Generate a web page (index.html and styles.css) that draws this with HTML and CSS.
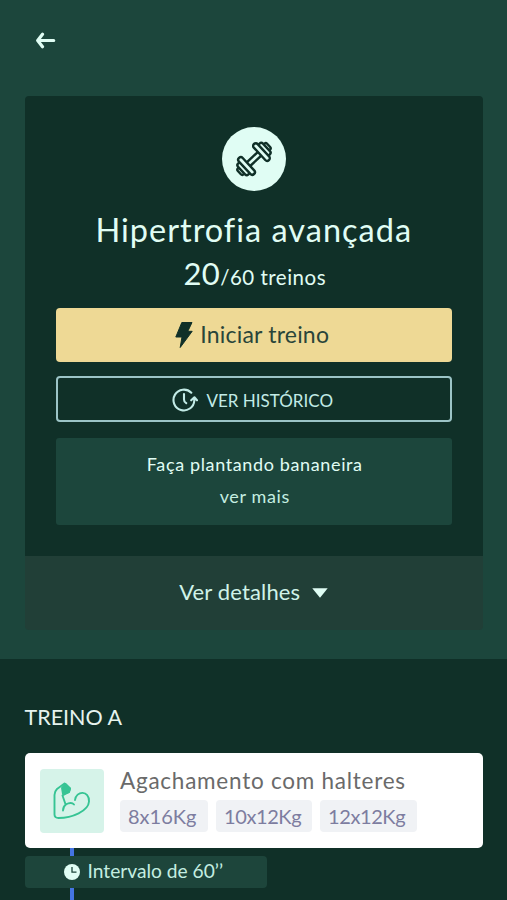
FILE: index.html
```html
<!DOCTYPE html>
<html lang="pt-BR">
<head>
<meta charset="utf-8">
<meta name="viewport" content="width=device-width, initial-scale=1">
<title>Hipertrofia avançada</title>
<link rel="stylesheet" href="styles.css">
</head>
<body>
<main class="screen">
  <section class="hero">
    <header class="topbar">
      <a class="back" aria-label="Voltar">
        <svg width="22" height="18" viewBox="0 0 22 18" fill="none" stroke="currentColor" stroke-width="3.200" stroke-linecap="round" stroke-linejoin="round"><path d="M18.700 8.500H3.500M7.500 2.200L2.700 8.500L7.500 14.800"/></svg>
      </a>
    </header>
    <article class="plan">
      <div class="plan-body">
        <div class="plan-icon">
          <svg width="40" height="40" viewBox="-20 -20 40 40" fill="#e0fdf4" stroke="#103028" stroke-width="2.400" stroke-linejoin="round">
            <g transform="rotate(-43)">
              <rect x="-20" y="-4" width="4" height="8" rx="1.800"/>
              <rect x="16" y="-4" width="4" height="8" rx="1.800"/>
              <rect x="-17" y="-7.500" width="5" height="15" rx="2.400"/>
              <rect x="12" y="-7.500" width="5" height="15" rx="2.400"/>
              <rect x="-8" y="-2.500" width="16" height="5"/>
              <rect x="-12.800" y="-11" width="5.200" height="22" rx="2.600"/>
              <rect x="7.600" y="-11" width="5.200" height="22" rx="2.600"/>
            </g>
          </svg>
        </div>
        <h1 class="plan-title">Hipertrofia avançada</h1>
        <p class="progress"><span class="done">20</span><span class="total">/60 treinos</span></p>
        <button class="btn start">
          <svg width="18" height="26" viewBox="0 0 18 26"><path d="M6.800 0.500H17L12.800 9.300H17.200L5.200 25.500L7 15H0.800Z" fill="#103028" stroke="#103028" stroke-linejoin="round"/></svg>
          <span>Iniciar treino</span>
        </button>
        <button class="btn history">
          <svg width="26" height="24" viewBox="0 0 26 24" fill="none" stroke="currentColor" stroke-width="2.100" stroke-linecap="round" stroke-linejoin="round"><path d="M19.300 4.700A10.400 10.400 0 1 0 22.300 12.500V10.500M19.200 12.300L22.400 9.300L25 12.300M12 6V11.500Q12 14 14.200 15.200"/></svg>
          <span>VER HISTÓRICO</span>
        </button>
        <div class="note">
          <p class="note-text">Faça plantando bananeira</p>
          <a class="note-more">ver mais</a>
        </div>
      </div>
      <footer class="details">
        <span>Ver detalhes</span>
        <svg width="16" height="10" viewBox="0 0 16 10"><path d="M0.300 0.300H15.700L8 9.700Z" fill="#e0fdf4"/></svg>
      </footer>
    </article>
  </section>
  <section class="workout">
    <h2 class="workout-title">TREINO A</h2>
    <article class="exercise">
      <div class="thumb">
        <svg width="64" height="64" viewBox="0 0 64 64" fill="none" stroke="#36c494" stroke-width="1.900" stroke-linecap="round" stroke-linejoin="round"><path d="M22.500 26.500L25.600 35.500Q31.500 32.500 34 35.500M35 31C36 21.500 49.500 21 49 32.500C48.500 42 32 49 18.500 49Q14.500 49 14.500 45.500V26Q14.500 22.500 17 20L24.500 14.500L30 19.500L29 23L22.500 26.500M26 35.500Q23 37.500 23 41.500"/><path d="M22 19L25.500 15L30 19.500L29 23L23 25Z" fill="#36c494"/></svg>
      </div>
      <div class="exercise-info">
        <h3 class="exercise-name">Agachamento com halteres</h3>
        <div class="sets"><span class="set s1">8x16Kg</span><span class="set s2">10x12Kg</span><span class="set s3">12x12Kg</span></div>
      </div>
    </article>
    <div class="connector"></div>
    <div class="interval">
      <svg width="16" height="16" viewBox="0 0 16 16"><circle cx="8" cy="8" r="8" fill="#e0fdf4"/><path d="M8 3V8.200H12.500" fill="none" stroke="#1d453b" stroke-width="1.300"/></svg>
      <span>Intervalo de 60’’</span>
    </div>
    <div class="connector tail"></div>
  </section>
</main>
</body>
</html>
```
FILE: styles.css
```css
* { box-sizing: border-box; }
body, h1, h2, h3, p { margin: 0; font-weight: 400; }
body { background: #103028; font-family: Lato, "Open Sans", sans-serif; color: #e0fdf4; }
svg { display: block; flex: none; }
.screen { width: 507px; height: 900px; overflow: hidden; }

.hero { height: 659px; padding: 0 24px 0 24.5px; background: #1c463c; }
.topbar { height: 96px; padding: 32px 0 0 10px; }
.back { display: block; width: 22px; }

.plan { border-radius: 4px; overflow: hidden; }
.plan-body { height: 460px; padding: 31px 31.500px; background: #103028; display: flex; flex-direction: column; }
.plan-icon { width: 64px; height: 64px; align-self: center; border-radius: 50%; background: #e0fdf4; display: flex; align-items: center; justify-content: center; }
.plan-title { height: 40px; margin-top: 19px; line-height: 40px; font-size: 32.500px; letter-spacing: 1px; text-align: center; white-space: nowrap; }
.progress { height: 40px; margin-top: 3px; padding-left: 2px; line-height: 40px; text-align: center; white-space: nowrap; }
.done { font-size: 31px; letter-spacing: .4px; }
.total { font-size: 20.500px; letter-spacing: .5px; }

.btn { padding: 0; border: 0; border-radius: 4px; font: inherit; display: flex; align-items: center; justify-content: center; flex: none; }
.btn span, .details span, .interval span { padding-bottom: 2px; }
.start { height: 54px; margin-top: 15px; gap: 7px; background: #eed995; color: #29453a; font-size: 23px; letter-spacing: .2px; padding-right: 3px; }
.history { height: 46px; margin-top: 14px; gap: 8px; background: transparent; border: 2px solid #9cc4c6; color: #c2ebe6; font-size: 17px; padding: 2px 2px 0 0; }
.history span { padding-bottom: 0; }
.note { height: 87px; margin-top: 16px; padding: 11px 0 0 2px; border-radius: 3px; background: #1c463c; text-align: center; font-size: 18px; line-height: 31.500px; letter-spacing: .63px; flex: none; }
.note-more { display: block; color: #c4eee1; }
.details { height: 74px; background: #213f37; display: flex; align-items: center; justify-content: center; gap: 12px; font-size: 22px; letter-spacing: .15px; color: #d0f3e9; }
.details span { padding-bottom: 3px; }

.workout { height: 241px; padding: 41px 24px 0 24.5px; }
.workout-title { height: 34px; line-height: 34px; font-size: 21.500px; color: #e6f3ee; }
.exercise { height: 95px; margin-top: 19px; padding: 15.500px; display: flex; gap: 16px; background: #fff; border-radius: 5px; }
.thumb { width: 64px; height: 64px; border-radius: 4px; background: #d6f3e9; flex: none; }
.exercise-name { height: 24px; line-height: 23px; font-size: 22.500px; letter-spacing: .75px; color: #6a6a6a; white-space: nowrap; }
.sets { display: flex; gap: 8px; margin-top: 7.500px; }
.set { height: 32px; padding-left: 8px; line-height: 33px; border-radius: 4px; background: #f0f2f5; color: #7d7da0; font-size: 20px; white-space: nowrap; }
.s1 { width: 88px; }
.s2 { width: 96px; letter-spacing: -.4px; }
.s3 { width: 97px; letter-spacing: -.4px; }
.connector { width: 4px; height: 8px; margin-left: 45.500px; background: #4474e2; }
.interval { width: 242px; height: 31.500px; padding-left: 39px; display: flex; align-items: center; gap: 8px; border-radius: 4px; background: #1d453b; font-size: 19.200px; color: #c4eee1; white-space: nowrap; }
.tail { height: 13px; }
```
